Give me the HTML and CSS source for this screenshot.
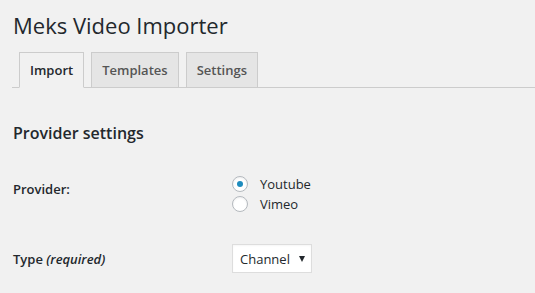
FILE: index.html
```html
<!DOCTYPE html>
<html lang="en">
<head>
  <meta charset="UTF-8" />
  <title>Meks Video Importer</title>
  <link rel="stylesheet" href="styles.css">
</head>
<body>
  <div class="wrap">
    <h1>Meks Video Importer</h1>

    <nav class="tabs">
      <a class="tab active" href="#">Import</a>
      <a class="tab" href="#">Templates</a>
      <a class="tab" href="#">Settings</a>
    </nav>

    <h2>Provider settings</h2>

    <table class="form-table">
      <tr class="row-provider">
        <th>Provider:</th>
        <td>
          <label class="radio"><input type="radio" name="provider" checked> Youtube</label>
          <label class="radio"><input type="radio" name="provider"> Vimeo</label>
        </td>
      </tr>
      <tr class="row-type">
        <th>Type <em>(required)</em></th>
        <td>
          <div class="select">Channel <span class="arrow"></span></div>
        </td>
      </tr>
    </table>
  </div>
</body>
</html>
```

FILE: styles.css
```css
body {
  margin: 0;
  background: #f1f1f1;
  color: #23282d;
  font-family: "Open Sans", sans-serif;
  font-size: 13px;
}
.wrap {
  padding: 11px 0 0 12px;
}
h1 {
  margin: 0 0 0 1px;
  font-size: 22px;
  font-weight: 400;
  line-height: 29px;
}
.tabs {
  display: flex;
  margin-top: 12px;
  padding-left: 7px;
  border-bottom: 1px solid #ccc;
}
.tab {
  margin-right: 7px;
  margin-bottom: -1px;
  padding: 5px 10px;
  border: 1px solid #ccc;
  background: #e5e5e5;
  color: #555;
  font-size: 13px;
  font-weight: 600;
  line-height: 24px;
  text-decoration: none;
}
.tab.active {
  background: #f1f1f1;
  color: #23282d;
  border-bottom-color: #f1f1f1;
}
h2 {
  margin: 33px 0 0 1px;
  font-size: 16px;
  font-weight: 600;
  line-height: 24px;
}
.form-table {
  margin-top: 29px;
  border-collapse: collapse;
}
.form-table th {
  width: 219px;
  padding: 5px 0 0 1px;
  text-align: left;
  vertical-align: top;
  font-weight: 600;
  line-height: 20px;
}
.form-table th em {
  font-weight: 600;
  font-style: italic;
}
.form-table td {
  padding: 0;
  vertical-align: top;
}
.row-type th {
  padding-top: 35px;
}
.row-type td {
  padding-top: 30px;
}
.radio {
  display: flex;
  align-items: center;
  height: 20px;
}
.radio input {
  appearance: none;
  width: 16px;
  height: 16px;
  margin: 0 12px 0 0;
  border: 1px solid #b4b9be;
  border-radius: 50%;
  background: #fff;
  box-shadow: inset 0 1px 2px rgba(0, 0, 0, .07);
  display: grid;
  place-items: center;
}
.radio input:checked::before {
  content: "";
  width: 6px;
  height: 6px;
  border-radius: 50%;
  background: #1e8cbe;
}
.select {
  display: inline-flex;
  align-items: center;
  height: 27px;
  padding: 0 6px 0 7px;
  border: 1px solid #ddd;
  background: #fff;
  box-shadow: inset 0 1px 2px rgba(0, 0, 0, .04);
}
.arrow {
  width: 0;
  height: 0;
  margin-left: 9px;
  border-left: 3px solid transparent;
  border-right: 3px solid transparent;
  border-top: 6px solid #23282d;
}
```
